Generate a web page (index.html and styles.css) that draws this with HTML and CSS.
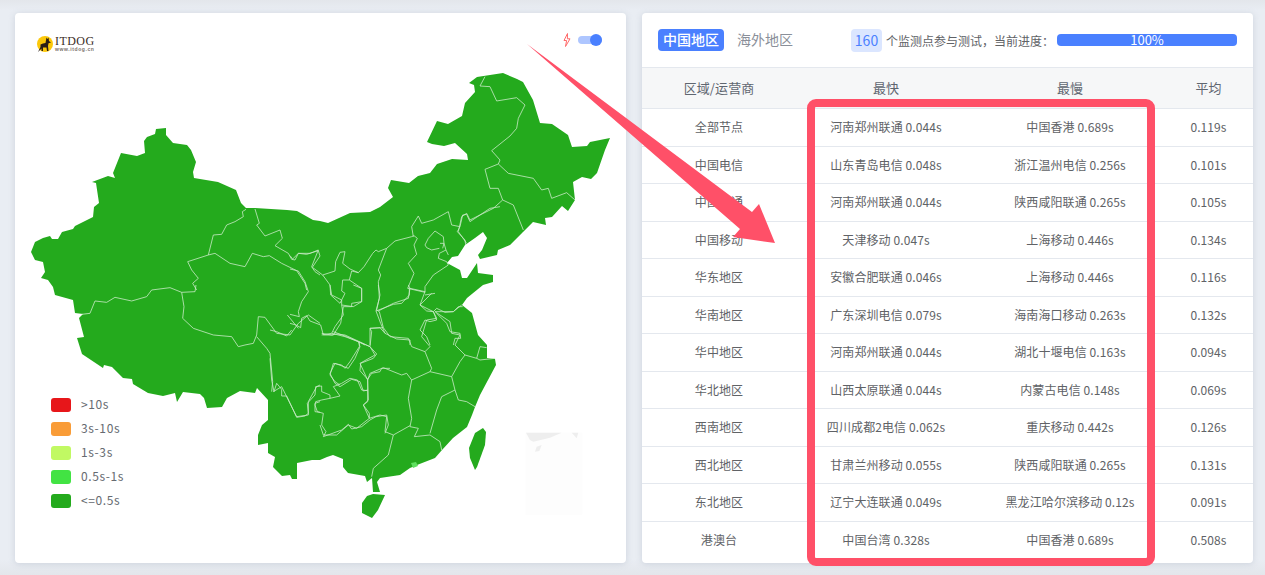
FILE: index.html
```html
<!DOCTYPE html>
<html lang="zh-CN">
<head>
<meta charset="utf-8">
<title>ITDOG</title>
<link rel="stylesheet" href="styles.css">
</head>
<body>
<main class="page">
  <section class="card map-card">
    <svg class="map" viewBox="15 13 611 550" aria-label="中国地图">
      <polygon class="land" points="31,252 35,242 43,238 50,236 52,239 58,239 62,232 73,229 75,226 93,217 94,207 99,203 96,183 92,182 108,176 115,178 113,173 121,153 137,156 145,153 144,141 147,137 155,134 156,129 166,128 166,135 173,143 187,145 191,150 196,162 193,172 194,178 218,182 236,190 241,203 246,208 255,208 287,210 297,211 313,220 320,221 328,223 350,213 370,212 380,207 393,197 388,188 391,180 409,183 418,176 430,173 437,164 452,159 468,160 467,154 455,143 444,146 432,144 427,142 437,121 448,124 462,116 465,103 475,92 474,85 469,83 477,77 503,73 517,79 523,82 533,100 540,123 552,124 568,135 572,147 587,146 590,142 610,138 605,150 597,173 591,179 582,177 573,182 575,200 568,211 562,206 552,217 545,218 546,225 533,222 523,232 510,245 498,250 497,255 480,259 478,255 482,250 487,238 483,232 475,238 465,245 458,256 452,257 447,263 460,270 462,278 467,278 477,263 478,273 493,275 493,282 483,285 467,298 462,305 472,313 478,335 487,345 487,358 495,359 496,365 488,380 480,395 475,407 472,415 467,427 453,438 442,450 435,458 417,465 410,468 400,475 380,478 377,482 380,492 373,492 372,478 367,482 365,476 348,473 343,467 343,459 333,455 327,457 320,460 312,460 297,463 297,479 292,479 290,475 282,476 273,467 275,457 268,453 268,443 258,445 258,435 262,425 268,420 268,400 257,388 255,393 240,391 227,398 222,407 207,408 204,398 200,394 183,392 177,402 175,393 163,396 148,393 133,384 132,379 123,378 112,367 104,365 103,368 82,354 77,338 84,337 79,318 83,314 75,313 73,300 55,295 53,287 48,280 41,278 45,272 43,262 35,260"/>
      <polygon class="land" points="373,494 385,495 378,510 372,518 362,513 362,503 367,496"/>
      <polygon class="land" points="483,428 486,432 485,445 477,467 475,470 470,458 469,448 475,433"/>
      <polygon class="hk" points="411,463 416,462 418,466 413,468"/>
      <g transform="translate(320 285) scale(.33333)">
        <rect class="sea-box" x="617" y="443" width="170" height="247"/>
        <polygon class="sea-top" points="618,443 725,443 690,458 640,470 630,465"/>
        <polygon class="sea-top" points="755,443 775,443 770,460"/>
        <polygon class="sea-top" points="650,485 665,480 658,498 645,500"/>
      </g>
      <g class="borders" transform="translate(0 0) scale(.33333)">
        <polyline points="625,765 640,705 665,703 680,675 705,665 730,650 727,635 738,628"/>
        <polyline points="765,627 778,670 770,675 795,708 840,690 847,715 825,737 865,760 875,778 885,780 895,760 930,760 955,750 935,800 945,815 960,825"/>
        <polyline points="563,785 625,765 645,760 690,790 735,800 757,760 790,770 808,767 845,790 890,812 915,850 920,870"/>
        <polyline points="563,785 575,810 595,835 578,850 590,870"/>
      </g>
      <g class="borders" transform="translate(320 0) scale(.33333)">
        <polyline points="495,230 480,258 510,260 530,303 590,293 615,315 595,355 590,385 570,408 515,452 540,480 535,492 565,520 640,535 665,570 685,565 695,595 740,578 765,600"/>
        <polyline points="535,492 495,508 510,565 535,565 548,600 580,615 610,690"/>
        <polyline points="548,600 520,625 450,660 440,640 425,650 415,695 440,730"/>
      </g>
      <g class="borders" transform="translate(0 285) scale(.33333)">
        <polyline points="245,88 270,85 285,48 320,52 345,37 395,48 440,35 455,15 510,8 545,22 552,65 548,100 580,130 640,150 695,155 715,185 735,180 760,175 770,150 775,95 795,97 830,145 870,150 895,115 925,90 960,115"/>
        <polyline points="545,22 585,20 588,0"/>
        <polyline points="770,155 800,190 810,205 818,290 815,320"/>
        <polyline points="862,90 895,130"/>
        <polyline points="820,320 845,305 890,395 925,390 925,350 950,305 960,300"/>
        <polyline points="960,350 945,355 945,380 960,382"/>
      </g>
      <g class="borders" transform="translate(290 195) scale(.33333)">
        <polyline points="0,182 8,192 25,175 50,178 85,167 90,183 67,217 98,240 135,228 137,200 150,172 165,170 158,205 180,222 205,233 222,215 248,175 258,165 265,170 290,160 315,138 365,125 372,122 382,130 372,150 380,178 355,205 372,235 353,280 405,292"/>
        <polyline points="290,160 265,225 272,240 265,260 268,310 258,348 310,328 335,325 358,300 358,280"/>
        <polyline points="258,348 272,385 285,415 320,432 360,435 360,450"/>
        <polyline points="98,240 120,270 122,300 150,325 165,295 155,288 158,255 178,255 215,280 215,320 185,325 185,335 160,335 152,385 130,420 100,420 92,390 60,378 50,362 35,370 32,398 18,390 0,385"/>
        <polyline points="178,255 185,228 205,233"/>
        <polyline points="130,410 170,425 205,440 225,450"/>
        <polyline points="240,450 240,400 270,398 285,415"/>
        <polyline points="0,222 25,228 45,260 55,290 35,320 25,350 28,365 0,358"/>
        <polyline points="405,292 405,275 430,240 475,210 470,200 445,190 448,175 468,165 475,180"/>
        <polyline points="370,125 365,95 385,63 395,85 430,75 475,50 485,90 510,95 518,60 530,58 540,80 600,40 630,35"/>
        <polyline points="510,95 502,110 525,135 527,150"/>
        <polyline points="448,160 425,165 410,158 405,150 415,130 435,108 460,125 462,145 468,165"/>
        <polyline points="450,145 462,145 458,160"/>
        <polyline points="425,295 390,330 410,348 430,350 440,340 465,352 490,350 505,335 518,335"/>
        <polyline points="430,350 440,375 420,380 405,375 390,405 410,425 420,450"/>
        <polyline points="440,355 470,385 480,410 510,415 512,430 495,430 490,450"/>
      </g>
      <g class="borders" transform="translate(270 330) scale(.33333)">
        <polyline points="0,85 5,150 12,185 20,160 35,178 35,198 50,198 80,262 105,258 115,250 112,220 135,195 137,170 155,168 155,185 180,195 180,205 210,198 190,170 215,160 240,145 262,150 275,180 293,182"/>
        <polyline points="180,205 155,210 137,215 135,225 142,245 160,250 155,285 168,305 160,320 215,300 235,283 245,297 275,290 300,270 318,260 350,255 355,285 345,310"/>
        <polyline points="293,148 293,215 280,225 298,250 298,265"/>
        <polyline points="293,148 270,122 272,100 310,85 320,72 300,50 268,35 225,15 200,12 185,15 155,10"/>
        <polyline points="293,148 305,130 330,125 335,115 360,115"/>
        <polyline points="190,100 215,105 225,115 240,95 268,50 268,35"/>
        <polyline points="190,100 180,135 195,155 210,165"/>
        <polyline points="0,0 20,5 50,18 65,0"/>
      </g>
      <g class="borders" transform="translate(320 285) scale(.33333)">
        <polyline points="30,0 35,30 65,45 65,60 70,90 45,125 35,145 5,150"/>
        <polyline points="35,145 75,155 115,170 150,185 165,210 120,235 143,285 145,345 130,360 148,400"/>
        <polyline points="115,170 120,185 105,220 85,250 45,235 30,265 45,295 60,305 95,283 120,290 130,318 143,315"/>
        <polyline points="65,60 100,65 125,50 125,10 100,0"/>
        <polyline points="150,185 155,140 150,130 190,128 178,80 170,75 180,30 175,0"/>
        <polyline points="175,78 220,55 265,40 270,10 265,0"/>
        <polyline points="270,10 315,20 300,60 340,80 350,100 320,105 305,155 330,185 315,200 335,250 330,260 275,285 265,340 275,400 270,425 295,430 283,455 330,450 360,470 365,495"/>
        <polyline points="190,128 210,155 265,160 275,185 315,200"/>
        <polyline points="143,285 150,265 190,248 245,270 260,265 275,285"/>
        <polyline points="148,400 110,430 85,420 50,450 10,450 0,420"/>
        <polyline points="148,400 180,390 200,395 195,440 220,450 205,510 160,550 155,575"/>
        <polyline points="220,450 270,422"/>
        <polyline points="330,445 350,375 365,335 405,315 395,275 420,230 435,210 405,180 420,150 395,145 390,110 345,80 365,80 400,80 425,60"/>
        <polyline points="330,260 395,275"/>
        <polyline points="405,315 415,345 440,350 465,365"/>
        <polyline points="435,210 470,220 480,185 500,188"/>
        <polyline points="470,220 480,225 525,220"/>
        <polyline points="315,30 345,25"/>
      </g>
    </svg>

    <header class="map-head">
      <div class="logo">
        <svg class="logo-mark" viewBox="0 0 16 16">
          <circle class="logo-sun" cx="8" cy="8" r="8"/>
          <path class="logo-dog" d="M1 16 L3.500 11 L3.500 8.500 L6 7.500 L8.500 7 L9.500 1.500 L10.500 3 L11.500 1.500 L12 5 L14 6.500 L11.500 7.200 L11 10 L11.500 15 L10 15 L9.500 11.500 L6 11.500 L6 15 L4.500 15 L4.500 12.500 Z"/>
        </svg>
        <div class="logo-words">
          <span class="logo-name">ITDOG</span>
          <span class="logo-url">www.itdog.cn</span>
        </div>
      </div>
      <div class="mode">
        <svg class="bolt" viewBox="0 0 10 14">
          <path d="M5.500 .5 L2 7.500 L4.600 7.500 L3.500 13.500 L8 5.800 L5.400 5.800 Z"/>
        </svg>
        <span class="toggle"><span class="knob"></span></span>
      </div>
    </header>

    <ul class="legend">
      <li><i class="swatch s-red"></i><span>&gt;10s</span></li>
      <li><i class="swatch s-orange"></i><span>3s-10s</span></li>
      <li><i class="swatch s-lime"></i><span>1s-3s</span></li>
      <li><i class="swatch s-light"></i><span>0.5s-1s</span></li>
      <li><i class="swatch s-green"></i><span>&lt;=0.5s</span></li>
    </ul>
  </section>

  <section class="card table-card">
    <header class="table-head">
      <span class="tab tab-on">中国地区</span>
      <span class="tab">海外地区</span>
      <span class="count">160</span>
      <span class="note">个监测点参与测试，当前进度：</span>
      <div class="progress">100%</div>
    </header>
    <table class="results">
      <colgroup>
        <col class="c1"><col class="c2"><col class="c3"><col class="c4">
      </colgroup>
      <thead>
        <tr><th>区域/运营商</th><th>最快</th><th>最慢</th><th>平均</th></tr>
      </thead>
      <tbody>
        <tr><td>全部节点</td><td>河南郑州联通 0.044s</td><td>中国香港 0.689s</td><td>0.119s</td></tr>
        <tr><td>中国电信</td><td>山东青岛电信 0.048s</td><td>浙江温州电信 0.256s</td><td>0.101s</td></tr>
        <tr><td>中国联通</td><td>河南郑州联通 0.044s</td><td>陕西咸阳联通 0.265s</td><td>0.105s</td></tr>
        <tr><td>中国移动</td><td>天津移动 0.047s</td><td>上海移动 0.446s</td><td>0.134s</td></tr>
        <tr><td>华东地区</td><td>安徽合肥联通 0.046s</td><td>上海移动 0.446s</td><td>0.116s</td></tr>
        <tr><td>华南地区</td><td>广东深圳电信 0.079s</td><td>海南海口移动 0.263s</td><td>0.132s</td></tr>
        <tr><td>华中地区</td><td>河南郑州联通 0.044s</td><td>湖北十堰电信 0.163s</td><td>0.094s</td></tr>
        <tr><td>华北地区</td><td>山西太原联通 0.044s</td><td>内蒙古电信 0.148s</td><td>0.069s</td></tr>
        <tr><td>西南地区</td><td>四川成都2电信 0.062s</td><td>重庆移动 0.442s</td><td>0.126s</td></tr>
        <tr><td>西北地区</td><td>甘肃兰州移动 0.055s</td><td>陕西咸阳联通 0.265s</td><td>0.131s</td></tr>
        <tr><td>东北地区</td><td>辽宁大连联通 0.049s</td><td>黑龙江哈尔滨移动 0.12s</td><td>0.091s</td></tr>
        <tr><td>港澳台</td><td>中国台湾 0.328s</td><td>中国香港 0.689s</td><td>0.508s</td></tr>
      </tbody>
    </table>
  </section>
</main>

<svg class="annotation" viewBox="0 0 1265 575" aria-hidden="true">
  <polygon class="arrow" points="527,44 752,212 759,204 775,243 733,237 740,229"/>
  <rect class="callout" x="811" y="103" width="340" height="459" rx="5"/>
</svg>
</body>
</html>
```

FILE: styles.css
```css
* { box-sizing: border-box; }

html, body {
  margin: 0;
  height: 575px;
  overflow: hidden;
}

body {
  position: relative;
  background: linear-gradient(#e3e6eb 0, #e9edf3 10px, #e9edf3 560px, #e3e6eb 100%);
  font-family: "Noto Sans CJK SC", "Noto Sans", sans-serif;
  color: #606266;
}

.page {
  display: flex;
  gap: 16px;
  padding: 13px 12px 12px 15px;
  height: 575px;
}

.card {
  position: relative;
  flex: 0 0 611px;
  height: 550px;
  background: #fff;
  border-radius: 4px;
  box-shadow: 0 1px 6px rgba(170, 180, 195, .45);
  overflow: hidden;
}

/* map card */
.map {
  position: absolute;
  left: 0;
  top: 0;
  width: 611px;
  height: 550px;
}

.land { fill: #24aa1d; }
.hk { fill: #5fe05f; }
.sea-box { fill: #fdfdfd; }
.sea-top { fill: #eeeeee; }

.borders polyline {
  fill: none;
  stroke: #c9ebc6;
  stroke-width: .8;
  stroke-linejoin: round;
  vector-effect: non-scaling-stroke;
}

.map-head {
  position: relative;
  display: flex;
  justify-content: space-between;
  align-items: flex-start;
  padding: 22px 24px 0 22px;
}

.logo {
  display: flex;
  align-items: center;
  gap: 2px;
  height: 17px;
}

.logo-mark { width: 16px; height: 16px; }
.logo-sun { fill: #fcc80a; }
.logo-dog { fill: #2a1d16; }

.logo-words {
  display: flex;
  flex-direction: column;
  line-height: 1;
}

.logo-name {
  font-family: "Liberation Serif", serif;
  font-size: 12px;
  height: 11px;
  line-height: 11px;
  letter-spacing: .45px;
  color: #3a2c26;
}

.logo-url {
  font-family: "Liberation Sans", sans-serif;
  font-size: 5px;
  height: 5px;
  line-height: 5px;
  font-weight: 700;
  letter-spacing: .6px;
  color: #7a716c;
}

.mode {
  display: flex;
  align-items: center;
  gap: 6px;
  height: 16px;
  margin-top: -3px;
}

.bolt { width: 10px; height: 14px; }
.bolt path { fill: #fff; stroke: #ff6a6a; stroke-width: 1; }

.toggle {
  position: relative;
  display: block;
  width: 24px;
  height: 8px;
  border-radius: 4px;
  background: #aec6ff;
}

.knob {
  position: absolute;
  right: 0;
  top: -2px;
  width: 12px;
  height: 12px;
  border-radius: 50%;
  background: #4a80ff;
}

.legend {
  position: absolute;
  left: 36px;
  top: 385px;
  margin: 0;
  padding: 0;
  list-style: none;
  font-size: 12px;
  color: #666a70;
}

.legend li {
  display: flex;
  align-items: center;
  gap: 10px;
  height: 14px;
  margin-bottom: 10px;
  letter-spacing: .6px;
}

.legend span {
  margin-top: -3px;
}

.swatch {
  display: block;
  width: 20px;
  height: 14px;
  border-radius: 3px;
}

.s-red { background: #e7161a; }
.s-orange { background: #f99c37; }
.s-lime { background: #c1f963; }
.s-light { background: #42e343; }
.s-green { background: #24aa1d; }

/* table card */
.table-head {
  display: flex;
  align-items: center;
  height: 54px;
  padding: 0 16px;
  font-size: 12px;
}

.tab {
  display: block;
  padding: 0 5px;
  height: 22px;
  line-height: 21px;
  border-radius: 4px;
  font-size: 14px;
  color: #8a8f99;
  white-space: nowrap;
}

.tab-on {
  margin-right: 8px;
  background: #4a80ff;
  color: #fff;
  font-weight: 500;
}

.count {
  margin-left: 53px;
  width: 31px;
  height: 23px;
  line-height: 23px;
  text-align: center;
  border-radius: 4px;
  background: #dbe6ff;
  color: #4a80ff;
  font-size: 14px;
}

.note {
  margin-left: 4px;
  color: #606266;
  white-space: nowrap;
}

.progress {
  margin-left: 3px;
  width: 180px;
  height: 12px;
  line-height: 12px;
  text-align: center;
  border-radius: 4px;
  background: #4a80ff;
  color: #fff;
  font-size: 13px;
}

.results {
  width: 611px;
  table-layout: fixed;
  border-collapse: collapse;
  font-size: 12px;
  letter-spacing: .1px;
  text-align: center;
}

.c1 { width: 154px; }
.c2 { width: 180px; }
.c3 { width: 188px; }
.c4 { width: 89px; }

.results th {
  height: 41px;
  padding: 0 0 2px;
  font-size: 13px;
  font-weight: 400;
  color: #5f6670;
  background: #f6f7f8;
  border-top: 1px solid #e4e8ee;
  border-bottom: 1px solid #e4e8ee;
}

.results td {
  height: 37.5px;
  padding: 0 0 1px;
  white-space: nowrap;
  border-bottom: 1px solid #e4e8ee;
}

.results tbody tr:last-child td { border-bottom: 0; }

/* annotation drawn over the finished screenshot */
.annotation {
  position: absolute;
  left: 0;
  top: 0;
  width: 1265px;
  height: 575px;
  pointer-events: none;
}

.arrow { fill: #ff5068; }

.callout {
  fill: none;
  stroke: #ff5068;
  stroke-width: 8;
}
```
